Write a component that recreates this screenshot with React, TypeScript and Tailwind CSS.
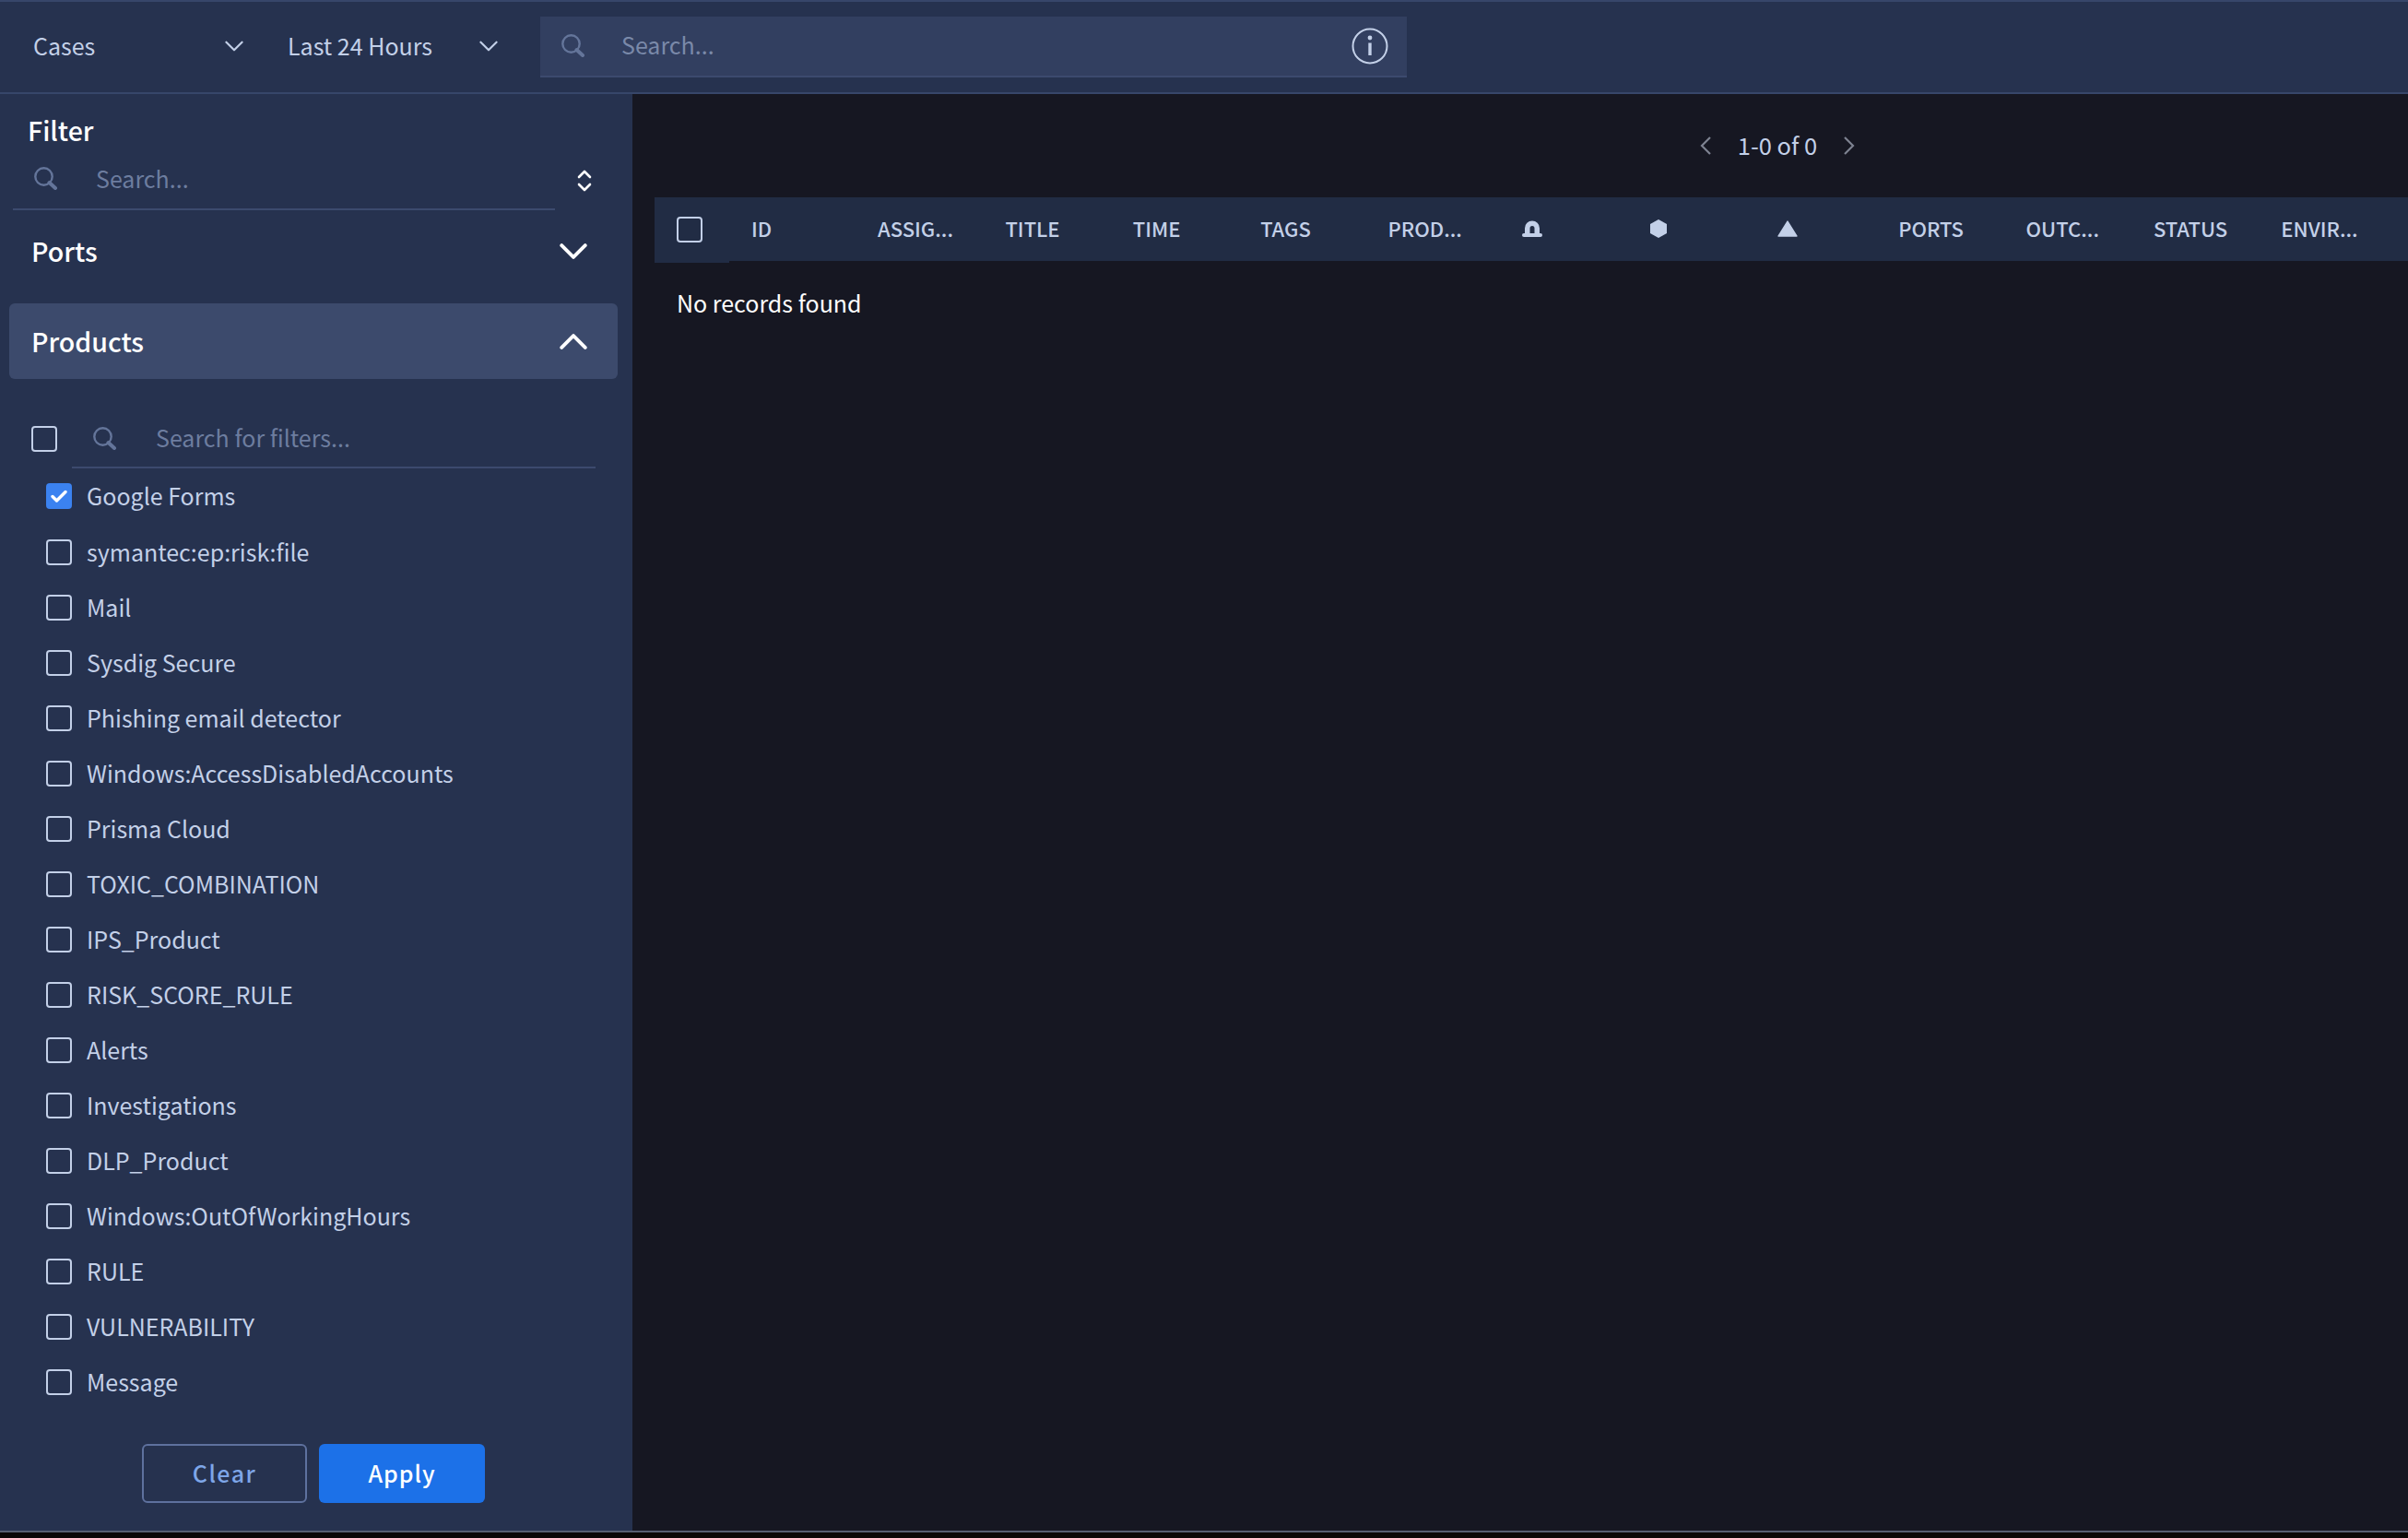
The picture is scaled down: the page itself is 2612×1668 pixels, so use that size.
import React from "react";

const items = [
  "symantec:ep:risk:file", "Mail", "Sysdig Secure", "Phishing email detector", "Windows:AccessDisabledAccounts",
  "Prisma Cloud", "TOXIC_COMBINATION", "IPS_Product", "RISK_SCORE_RULE", "Alerts", "Investigations",
  "DLP_Product", "Windows:OutOfWorkingHours", "RULE", "VULNERABILITY", "Message",
];

function SearchIcon({ className }: { className?: string }) {
  return (
    <svg viewBox="0 0 26 25" className={className} fill="none">
      <circle cx="10.5" cy="10.5" r="9.2" stroke="#64759a" strokeWidth="2.4" />
      <path d="M16.5 17l6.5 6" stroke="#64759a" strokeWidth="4" strokeLinecap="round" />
    </svg>
  );
}

function Chevron({ up, className, color = "#ffffff", w = 3 }: { up?: boolean; className?: string; color?: string; w?: number }) {
  return (
    <svg viewBox="0 0 28 16" className={className} fill="none">
      <path d={up ? "M2 14L14 2l12 12" : "M2 2l12 12L26 2"} stroke={color} strokeWidth={w} strokeLinecap="round" strokeLinejoin="round" />
    </svg>
  );
}

function Box({ checked }: { checked?: boolean }) {
  if (checked)
    return (
      <span className="w-[28px] h-[28px] rounded-[4px] bg-[#3b82f0] flex items-center justify-center shrink-0">
        <svg viewBox="0 0 18 14" className="w-[18px] h-[14px]" fill="none">
          <path d="M2 7.5l4.5 4.5L16 2.5" stroke="#fff" strokeWidth="3.4" strokeLinecap="round" strokeLinejoin="round" />
        </svg>
      </span>
    );
  return <span className="w-[28px] h-[28px] rounded-[4px] border-2 border-[#c3d0e8] shrink-0 block" />;
}

const heads = ["ASSIG...", "TITLE", "TIME", "TAGS", "PROD..."];
const tail = ["PORTS", "OUTC...", "STATUS", "ENVIR..."];

export default function App() {
  return (
    <div className="w-[2612px] h-[1668px] overflow-hidden flex flex-col bg-[#161722] font-['Noto_Sans_CJK_SC','Noto_Sans',sans-serif]">
      {/* Top bar */}
      <header className="h-[102px] shrink-0 bg-[#26324f] border-t-2 border-b-2 border-[#37466a] flex items-center">
        <div className="w-[290px] pl-[36px] pr-[26px] flex items-center justify-between text-[#c3d0e8] text-[25px] pb-[2px]">
          <span>Cases</span>
          <Chevron className="w-[20px] h-[12px]" color="#c3d0e8" w={3} />
        </div>
        <div className="w-[296px] pl-[22px] pr-[46px] flex items-center justify-between text-[#c3d0e8] text-[25px] pb-[2px]">
          <span>Last 24 Hours</span>
          <Chevron className="w-[20px] h-[12px]" color="#c3d0e8" w={3} />
        </div>
        <div className="w-[940px] h-[66px] bg-[#323f60] border-b-2 border-[#3c4a6e] flex items-center pl-[23px] pr-[20px]">
          <SearchIcon className="w-[26px] h-[25px] mb-[2px]" />
          <span className="ml-[39px] text-[25px] text-[#7a89a9] pb-[2px]">Search...</span>
          <svg viewBox="0 0 40 40" className="ml-auto w-[40px] h-[40px]" fill="none">
            <circle cx="20" cy="20" r="18.5" stroke="#c3d0e8" strokeWidth="2" />
            <circle cx="20" cy="11" r="2.4" fill="#c3d0e8" />
            <path d="M20 16.5V30" stroke="#c3d0e8" strokeWidth="3.4" />
          </svg>
        </div>
      </header>

      <div className="flex-1 min-h-0 flex">
        {/* Sidebar */}
        <aside className="w-[686px] shrink-0 bg-[#26324f] flex flex-col">
          <div className="pl-[30px] pt-[17px] text-white text-[28.5px] font-medium leading-[44px]">Filter</div>
          <div className="flex items-start mt-[3px]">
            <div className="w-[588px] ml-[14px] h-[62px] pb-[5px] border-b-2 border-[#3c4a6e] flex items-center pl-[23px]">
              <SearchIcon className="w-[26px] h-[25px]" />
              <span className="ml-[41px] text-[25px] text-[#6d7d9f]">Search...</span>
            </div>
            <svg viewBox="0 0 16 26" className="ml-[24px] mt-[17px] w-[16px] h-[26px]" fill="none">
              <path d="M2 9l6-6 6 6M2 17l6 6 6-6" stroke="#fff" strokeWidth="2.6" strokeLinecap="round" strokeLinejoin="round" />
            </svg>
          </div>
          <div className="h-[82px] ml-[10px] mr-[16px] mt-[3px] flex items-center justify-between pl-[24px] pr-[33px] text-white text-[28.5px] font-medium">
            <span>Ports</span>
            <Chevron className="w-[30px] h-[17px]" w={3.6} />
          </div>
          <div className="h-[82px] ml-[10px] mr-[16px] mt-[16px] rounded-[6px] bg-[#3c4a6c] flex items-center justify-between pl-[24px] pr-[33px] text-white text-[28.5px] font-medium">
            <span>Products</span>
            <Chevron up className="w-[30px] h-[17px]" w={3.6} />
          </div>
          <div className="flex items-center mt-[33px] pl-[34px]">
            <Box />
            <div className="ml-[16px] w-[568px] h-[64px] border-b-2 border-[#3c4a6e] flex items-center pl-[23px]">
              <SearchIcon className="w-[26px] h-[25px]" />
              <span className="ml-[42px] text-[25px] text-[#6d7d9f]">Search for filters...</span>
            </div>
          </div>
          <div className="flex items-center h-[60px] mb-[1px] pl-[50px] gap-[16px] text-[#c3d0e8] text-[25px]">
            <Box checked />
            <span>Google Forms</span>
          </div>
          {items.map((t) => (
            <div key={t} className="flex items-center h-[60px] pl-[50px] gap-[16px] text-[#c3d0e8] text-[25px]">
              <Box />
              <span>{t}</span>
            </div>
          ))}
          <div className="mt-[37px] flex justify-start pl-[154px] gap-[13px]">
            <button className="w-[179px] h-[64px] rounded-[6px] border-2 border-[#5e719e] text-[#7ea6e8] text-[25px] font-medium tracking-[1.5px]">Clear</button>
            <button className="w-[180px] h-[64px] rounded-[6px] bg-[#1c71e8] text-white text-[25px] font-medium tracking-[1px]">Apply</button>
          </div>
        </aside>

        {/* Main */}
        <main className="flex-1 min-w-0 flex flex-col">
          <div className="h-[112px] pb-[1px] flex items-center justify-center pl-[558px] gap-[29px] text-[#c3d0e8] text-[25.5px]">
            <svg viewBox="0 0 12 20" className="w-[12px] h-[20px]" fill="none"><path d="M11 1L2 10l9 9" stroke="#7d8291" strokeWidth="2.2" /></svg>
            <span>1-0 of 0</span>
            <svg viewBox="0 0 12 20" className="w-[12px] h-[20px]" fill="none"><path d="M1 1l9 9-9 9" stroke="#7d8291" strokeWidth="2.2" /></svg>
          </div>
          <div className="ml-[24px] h-[69px] bg-[#212c44] flex items-center text-[#c3d0e8] text-[22px] font-medium">
            <div className="w-[81px] pl-[24px] pb-[2px] h-[71px] self-start bg-[#212c44] flex items-center shrink-0"><Box /></div>
            <span className="w-[137px] pl-[24px] shrink-0 box-content mb-[2px]">ID</span>
            {heads.map((h) => (
              <span key={h} className="w-[138.4px] shrink-0 mb-[2px]">{h}</span>
            ))}
            <span className="w-[138.4px] shrink-0 pl-[7px] mb-[2px]">
              <svg viewBox="0 0 22 18" className="w-[22px] h-[18px]" fill="#c3d0e8">
                <path d="M3 14V8.5a8 8 0 0 1 16 0V14h-5.5V8.5a2.5 2.5 0 0 0-5 0V14z" />
                <rect x="0" y="14" width="22" height="4" rx="2" />
              </svg>
            </span>
            <span className="w-[138.4px] shrink-0 pl-[8px] mb-[2px]">
              <svg viewBox="0 0 18 20" className="w-[18px] h-[20px]" fill="#c3d0e8">
                <path d="M9 0l9 5v10l-9 5-9-5V5z" />
              </svg>
            </span>
            <span className="w-[138.4px] shrink-0 pl-[7px] mb-[2px]">
              <svg viewBox="0 0 22 18" className="w-[22px] h-[18px]" fill="#c3d0e8">
                <path d="M11 1l10 16H1z" stroke="#c3d0e8" strokeWidth="1.4" strokeLinejoin="round" />
              </svg>
            </span>
            {tail.map((h) => (
              <span key={h} className="w-[138.4px] shrink-0 mb-[2px]">{h}</span>
            ))}
          </div>
          <div className="mt-[27px] ml-[48px] text-white text-[25px]">No records found</div>
        </main>
      </div>
      <div className="h-[8px] shrink-0 bg-[#0a0806] border-t-2 border-[#565e70]" />
    </div>
  );
}
